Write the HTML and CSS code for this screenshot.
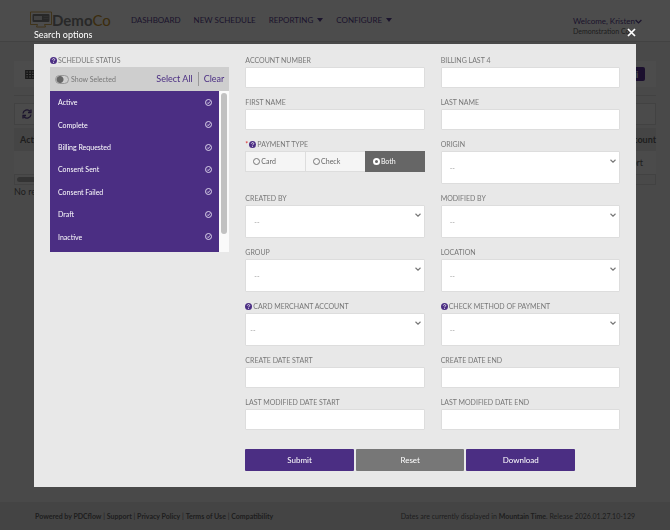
FILE: index.html
```html
<!DOCTYPE html>
<html lang="en">
<head>
    <meta charset="UTF-8">
    <meta name="viewport" content="width=device-width, initial-scale=1.0">
    <title>Search options</title>
    <link rel="stylesheet" href="styles.css">
</head>
<body>

    <svg class="sprite" aria-hidden="true">
        <symbol id="help" viewBox="0 0 14 14">
            <circle cx="7" cy="7" r="7" fill="#4b2e83"/>
            <path d="M4.8 5.4c0-3 4.600-2.900 4.600-.2 0 1.700-2.300 1.600-2.300 3.300" fill="none" stroke="#fff" stroke-width="1.6"/>
            <circle cx="7.1" cy="10.7" r="1" fill="#fff"/>
        </symbol>
        <symbol id="check" viewBox="0 0 14 14">
            <circle cx="7" cy="7" r="6" fill="none" stroke="#e9e3f4" stroke-width="1.8"/>
            <path d="M4.400 7.200l2 2 3.600-4.200" fill="none" stroke="#e9e3f4" stroke-width="1.8"/>
        </symbol>
        <symbol id="chevron" viewBox="0 0 12 8">
            <path d="M1 1.500l5 5 5-5" fill="none" stroke="currentColor" stroke-width="2.2"/>
        </symbol>
    </svg>

    <header class="header">
        <a class="logo" href="#">
            <svg width="22" height="17" viewBox="0 0 44 34" aria-hidden="true">
                <path d="M1 2h42v25H29l2 5H13l2-5H1z" fill="none" stroke="#c9952c" stroke-width="1.6"/>
                <rect x="5" y="6" width="34" height="16" rx="2" fill="#888"/>
                <path d="M8 10h16v8H8z" fill="#ddd"/>
                <path d="M27 11h10M27 15h10" stroke="#bbb" stroke-width="1"/>
            </svg>
            <span>Demo<b>Co</b></span>
        </a>
        <nav class="nav">
            <a href="#">DASHBOARD</a>
            <a href="#">NEW SCHEDULE</a>
            <a href="#" class="caret">REPORTING</a>
            <a href="#" class="caret">CONFIGURE</a>
        </nav>
        <div class="user">
            <a href="#">Welcome, Kristen<svg width="7" height="5"><use href="#chevron"/></svg></a>
            <span>Demonstration Co</span>
        </div>
    </header>

    <main class="page">
        <div class="page-bar">
            <svg width="10" height="9" viewBox="0 0 20 18" aria-hidden="true">
                <path d="M1.5 1.5h17v15h-17zM1.5 6.5h17M1.5 11.5h17M7 2v14M13 2v14" fill="none" stroke="#555" stroke-width="2.6"/>
            </svg>
            <button type="button" class="info" aria-label="Information">i</button>
        </div>
        <div class="results">
            <div class="results-bar">
                <svg width="10" height="10" viewBox="0 0 20 20" fill="none" stroke="#5c4496" stroke-width="2.6" aria-hidden="true">
                    <path d="M2 9a8 8 0 0 1 14-4.500M18 11a8 8 0 0 1-14 4.500M18 1v6h-6M2 19v-6h6"/>
                </svg>
            </div>
            <table>
                <thead>
                    <tr><th>Actions</th><th class="right">Account</th></tr>
                </thead>
                <tbody>
                    <tr><td></td><td class="right sort">Sort</td></tr>
                </tbody>
            </table>
            <div class="track"><div class="thumb"></div></div>
            <p>No results</p>
        </div>
    </main>

    <footer class="footer">
        <div class="links">
            <a href="#">Powered by PDCflow</a> | <a href="#">Support</a> | <a href="#">Privacy Policy</a> | <a href="#">Terms of Use</a> | <a href="#">Compatibility</a>
        </div>
        <div>Dates are currently displayed in <b>Mountain Time</b>. Release 2026.01.27.10-129</div>
    </footer>

    <div class="overlay">
        <div class="dialog" role="dialog" aria-labelledby="dialog-title">
            <div class="dialog-head">
                <h1 id="dialog-title">Search options</h1>
                <button type="button" class="close" aria-label="Close">
                    <svg width="9" height="9" viewBox="0 0 9 9"><path d="M1 1l7 7M8 1L1 8" stroke="#fff" stroke-width="1.7"/></svg>
                </button>
            </div>

            <form class="dialog-body">
                <fieldset class="status">
                    <legend class="label"><svg class="help"><use href="#help"/></svg>SCHEDULE STATUS</legend>
                    <div class="status-bar">
                        <label class="toggle"><input type="checkbox">Show Selected</label>
                        <button type="button">Select All</button>
                        <button type="button" class="clear">Clear</button>
                    </div>
                    <div class="status-scroll">
                        <div class="status-list">
                            <label><input type="checkbox" checked>Active<svg><use href="#check"/></svg></label>
                            <label><input type="checkbox" checked>Complete<svg><use href="#check"/></svg></label>
                            <label><input type="checkbox" checked>Billing Requested<svg><use href="#check"/></svg></label>
                            <label><input type="checkbox" checked>Consent Sent<svg><use href="#check"/></svg></label>
                            <label><input type="checkbox" checked>Consent Failed<svg><use href="#check"/></svg></label>
                            <label><input type="checkbox" checked>Draft<svg><use href="#check"/></svg></label>
                            <label><input type="checkbox" checked>Inactive<svg><use href="#check"/></svg></label>
                        </div>
                        <div class="status-track"><div class="status-thumb"></div></div>
                    </div>
                </fieldset>

                <div class="fields">
                    <div class="field">
                        <label class="label" for="account">ACCOUNT NUMBER</label>
                        <input type="text" id="account">
                    </div>
                    <div class="field">
                        <label class="label" for="last4">BILLING LAST 4</label>
                        <input type="text" id="last4">
                    </div>
                    <div class="field">
                        <label class="label" for="first">FIRST NAME</label>
                        <input type="text" id="first">
                    </div>
                    <div class="field">
                        <label class="label" for="last">LAST NAME</label>
                        <input type="text" id="last">
                    </div>

                    <fieldset class="field">
                        <legend class="label"><span class="required">*</span><svg class="help"><use href="#help"/></svg>PAYMENT TYPE</legend>
                        <div class="radios">
                            <label><input type="radio" name="payment">Card</label>
                            <label><input type="radio" name="payment">Check</label>
                            <label class="active"><input type="radio" name="payment" checked>Both</label>
                        </div>
                    </fieldset>
                    <div class="field">
                        <label class="label" for="origin">ORIGIN</label>
                        <div class="select">
                            <select id="origin"><option>--</option></select>
                            <svg><use href="#chevron"/></svg>
                        </div>
                    </div>
                    <div class="field">
                        <label class="label" for="created-by">CREATED BY</label>
                        <div class="select">
                            <select id="created-by"><option>--</option></select>
                            <svg><use href="#chevron"/></svg>
                        </div>
                    </div>
                    <div class="field">
                        <label class="label" for="modified-by">MODIFIED BY</label>
                        <div class="select">
                            <select id="modified-by"><option>--</option></select>
                            <svg><use href="#chevron"/></svg>
                        </div>
                    </div>
                    <div class="field">
                        <label class="label" for="group">GROUP</label>
                        <div class="select">
                            <select id="group"><option>--</option></select>
                            <svg><use href="#chevron"/></svg>
                        </div>
                    </div>
                    <div class="field">
                        <label class="label" for="location">LOCATION</label>
                        <div class="select">
                            <select id="location"><option>--</option></select>
                            <svg><use href="#chevron"/></svg>
                        </div>
                    </div>
                    <div class="field">
                        <label class="label" for="merchant"><svg class="help"><use href="#help"/></svg>CARD MERCHANT ACCOUNT</label>
                        <div class="select">
                            <select id="merchant" class="narrow"><option>--</option></select>
                            <svg><use href="#chevron"/></svg>
                        </div>
                    </div>
                    <div class="field">
                        <label class="label" for="method"><svg class="help"><use href="#help"/></svg>CHECK METHOD OF PAYMENT</label>
                        <div class="select">
                            <select id="method"><option>--</option></select>
                            <svg><use href="#chevron"/></svg>
                        </div>
                    </div>

                    <div class="field">
                        <label class="label" for="create-start">CREATE DATE START</label>
                        <input type="text" id="create-start">
                    </div>
                    <div class="field">
                        <label class="label" for="create-end">CREATE DATE END</label>
                        <input type="text" id="create-end">
                    </div>
                    <div class="field">
                        <label class="label" for="modified-start">LAST MODIFIED DATE START</label>
                        <input type="text" id="modified-start">
                    </div>
                    <div class="field">
                        <label class="label" for="modified-end">LAST MODIFIED DATE END</label>
                        <input type="text" id="modified-end">
                    </div>

                    <div class="actions">
                        <button type="submit">Submit</button>
                        <button type="reset" class="grey">Reset</button>
                        <button type="button">Download</button>
                    </div>
                </div>
            </form>
        </div>
    </div>

</body>
</html>
```
FILE: styles.css
```css
* {
    box-sizing: border-box;
}

body {
    font-family: Lato, "Liberation Sans", sans-serif;
    font-size: 7px;
    margin: 0;
    min-height: 100vh;
    display: flex;
    flex-direction: column;
    background-color: #f5f5f5;
    color: #666;
}

a {
    color: inherit;
    text-decoration: none;
}

button, input, select {
    font: inherit;
    color: inherit;
    margin: 0;
}

button {
    border: none;
    background: none;
    padding: 0;
    cursor: pointer;
}

fieldset {
    border: none;
    margin: 0;
    padding: 0;
    min-width: 0;
}

legend {
    padding: 0;
}

.sprite {
    display: none;
}

/* Page header */
.header {
    display: flex;
    align-items: center;
    height: 42px;
    padding: 0 28px 2px 30px;
    background-color: #fff;
    border-bottom: 1px solid #ddd;
}

.logo {
    display: flex;
    align-items: center;
    font-size: 15px;
    font-weight: bold;
    color: #888;
}

.logo b {
    color: #c9952c;
    font-weight: normal;
}

.nav {
    display: flex;
    gap: 13px;
    margin-left: 20px;
    font-size: 8px;
    color: #5c4496;
}

.caret::after {
    content: "";
    display: inline-block;
    margin-left: 4px;
    vertical-align: 1px;
    border: 3px solid transparent;
    border-top: 4px solid #5c4496;
    border-bottom: none;
}

.nav a, .user {
    white-space: nowrap;
}

.user {
    display: flex;
    flex-direction: column;
    margin-left: auto;
    padding-top: 12px;
    line-height: 10px;
}

.user a {
    font-size: 8px;
    color: #5c4496;
}

/* Results behind the dialog */
.page {
    flex: 1;
    padding: 19px 14px;
}

.page-bar {
    display: flex;
    align-items: center;
    justify-content: space-between;
    height: 26px;
    padding: 0 11px;
    background-color: #fff;
}

.info {
    width: 16px;
    height: 14px;
    border-radius: 2px;
    background-color: #5a3399;
    color: #fff;
    font-size: 10px;
    font-weight: bold;
    line-height: 14px;
}

.results {
    margin-top: 8px;
    padding-top: 7px;
    border-top: 1px solid #ddd;
}

.results-bar {
    display: flex;
    align-items: center;
    height: 22px;
    padding: 0 7px;
    border: 1px solid #ddd;
    background-color: #fafafa;
}

.results table {
    width: 100%;
    margin-top: 3px;
    border-collapse: collapse;
    font-size: 9px;
}

.results th {
    height: 23px;
    padding: 0 0 0 6px;
    text-align: left;
    background-color: #e8e8e8;
}

.results td {
    height: 23px;
    padding: 0;
    background-color: #fafafa;
}

.results .right {
    text-align: right;
}

.results .sort {
    padding-right: 13px;
}

.track {
    padding: 2px;
    border: 1px solid #ddd;
}

.thumb {
    width: 50%;
    height: 5px;
    border-radius: 3px;
    background-color: #aaa;
}

.results p {
    margin: 1px 0 0;
    font-size: 9px;
    line-height: 12px;
}

/* Footer */
.footer {
    display: flex;
    align-items: center;
    justify-content: space-between;
    height: 28px;
    padding: 0 35px;
    background-color: #e5e5e5;
    white-space: nowrap;
}

.links a {
    font-weight: bold;
}

/* Search dialog */
.overlay {
    position: fixed;
    inset: 0;
    padding: 24px 34px;
    background-color: rgba(0, 0, 0, 0.7);
    overflow: auto;
}

.dialog-head {
    display: flex;
    align-items: center;
    justify-content: space-between;
    height: 20px;
}

.dialog-head h1 {
    margin: 0;
    font-size: 9px;
    font-weight: normal;
    color: #fff;
}

.close {
    display: flex;
    padding-bottom: 3px;
}

.dialog-body {
    display: grid;
    grid-template-columns: repeat(3, minmax(0, 1fr));
    gap: 16px;
    padding: 12px 16px 16px;
    background-color: #e8e8e8;
}

.label {
    display: flex;
    align-items: center;
    height: 11px;
    padding-bottom: 2px;
    line-height: 9px;
    color: #777;
}

.help {
    width: 7px;
    height: 7px;
    margin-right: 1px;
}

.required {
    margin-right: 1px;
    color: #d33;
}

/* Schedule status */
.status {
    align-self: start;
}

.status-bar {
    display: flex;
    align-items: center;
    height: 24px;
    padding: 0 5px;
    background-color: #cecece;
}

.toggle {
    display: flex;
    align-items: center;
    gap: 2px;
    margin-right: auto;
    color: #777;
}

.toggle input {
    appearance: none;
    width: 14px;
    height: 9px;
    border: 1px solid #999;
    border-radius: 5px;
    background: radial-gradient(circle at 4px 50%, #666 3px, transparent 4px);
}

.status-bar button {
    font-size: 9px;
    line-height: 14px;
    color: #4b2e83;
}

.status-bar .clear {
    margin-left: 5px;
    padding-left: 5px;
    border-left: 1px solid #999;
}

.status-scroll {
    display: flex;
    height: 161px;
    background-color: #fafafa;
}

.status-list {
    flex: 1;
    display: flex;
    flex-direction: column;
    padding-bottom: 4px;
    background-color: #4b2e83;
    color: #fff;
}

.status-list label {
    flex: 1;
    display: flex;
    align-items: center;
    padding: 0 7px 0 8px;
}

.status-list input {
    appearance: none;
    width: 0;
    height: 0;
}

.status-list svg {
    width: 7px;
    height: 7px;
    margin-left: auto;
}

.status-track {
    width: 10px;
    padding: 2px;
}

.status-thumb {
    height: 90%;
    border-radius: 3px;
    background-color: #c1c1c1;
}

/* Fields */
.fields {
    grid-column: span 2;
    display: grid;
    grid-template-columns: 1fr 1fr;
    gap: 10px 16px;
}

.field input[type="text"], .select select {
    display: block;
    width: 100%;
    height: 21px;
    padding: 0 8px;
    border: 1px solid #ddd;
    border-radius: 1px;
    background-color: #fff;
}

.select {
    position: relative;
}

.select select {
    appearance: none;
    height: 33px;
    color: #999;
}

.select .narrow {
    padding: 0 4px;
}

.select svg {
    position: absolute;
    top: 8px;
    right: 4px;
    width: 6px;
    height: 4px;
    color: #777;
    pointer-events: none;
}

.radios {
    display: grid;
    grid-template-columns: repeat(3, 1fr);
    height: 21px;
}

.radios label {
    display: flex;
    align-items: center;
    gap: 1px;
    padding-left: 7px;
    padding-bottom: 1px;
    border: 1px solid #ddd;
    border-right: none;
    background-color: #f5f5f5;
}

.radios .active {
    border-color: #666;
    background-color: #666;
    color: #fff;
}

.radios input {
    appearance: none;
    width: 7px;
    height: 7px;
    border: 1px solid #777;
    border-radius: 50%;
}

.radios input:checked {
    border: 2px solid #fff;
}

.actions {
    grid-column: 1 / -1;
    display: flex;
    gap: 2px;
    width: 88%;
    margin-top: 9px;
}

.actions button {
    flex: 1;
    height: 22px;
    border-radius: 1px;
    background-color: #4b2e83;
    color: #fff;
    font-size: 8px;
}

.actions .grey {
    background-color: #777;
}
```
